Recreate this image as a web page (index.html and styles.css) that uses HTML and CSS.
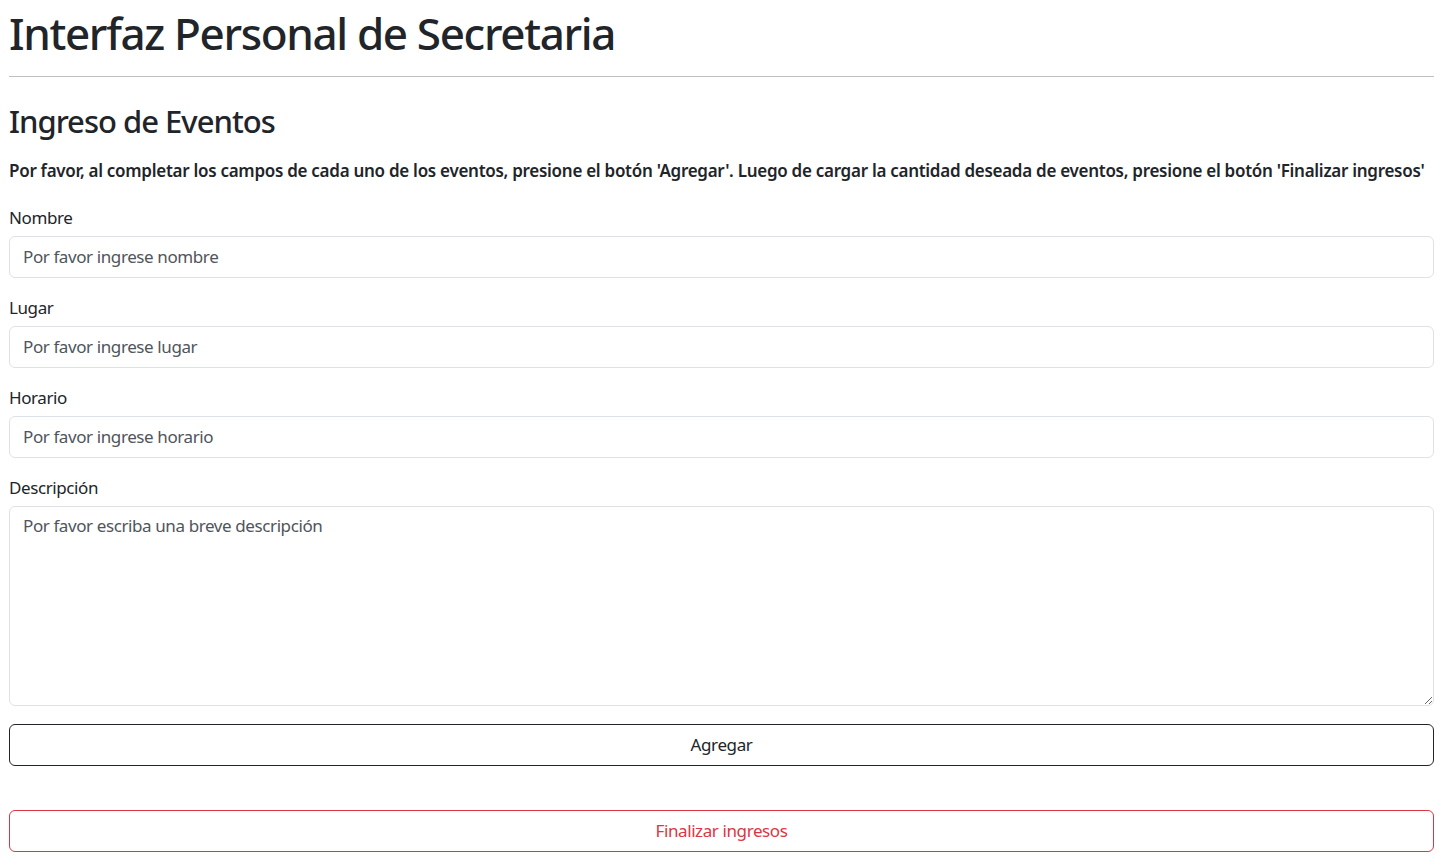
FILE: index.html
```html
<!DOCTYPE html>
<html lang="es">
<head>
<meta charset="utf-8">
<title>Interfaz Personal de Secretaria</title>
<link rel="stylesheet" href="styles.css">
</head>
<body>
<main class="page">
  <h1 class="title">Interfaz Personal de Secretaria</h1>
  <hr class="rule">
  <h2 class="subtitle">Ingreso de Eventos</h2>
  <p class="intro"><b>Por favor, al completar los campos de cada uno de los eventos, presione el botón 'Agregar'. Luego de cargar la cantidad deseada de eventos, presione el botón 'Finalizar ingresos'</b></p>
  <form class="form">
    <div class="field">
      <label class="label" for="nombre">Nombre</label>
      <input class="control" id="nombre" type="text" placeholder="Por favor ingrese nombre">
    </div>
    <div class="field">
      <label class="label" for="lugar">Lugar</label>
      <input class="control" id="lugar" type="text" placeholder="Por favor ingrese lugar">
    </div>
    <div class="field">
      <label class="label" for="horario">Horario</label>
      <input class="control" id="horario" type="text" placeholder="Por favor ingrese horario">
    </div>
    <div class="field">
      <label class="label" for="descripcion">Descripción</label>
      <textarea class="control area" id="descripcion" placeholder="Por favor escriba una breve descripción"></textarea>
    </div>
    <button type="button" class="btn btn-dark">Agregar</button>
  </form>
  <button type="button" class="btn btn-danger finish">Finalizar ingresos</button>
</main>
</body>
</html>
```
FILE: styles.css
```css
* { box-sizing: border-box; }
html, body { margin: 0; padding: 0; background: #fff; }
body {
  font-family: "Noto Sans", "Open Sans", sans-serif;
  color: #212529;
  font-size: 17px;
  line-height: 1.5;
}
.page {
  padding: 0 16px 0 9px;
}
.title {
  font-size: 44px;
  font-weight: 500;
  line-height: 1.2;
  margin: 0;
  padding-top: 7px;
  letter-spacing: -1.35px;
}
.rule {
  border: 0;
  border-top: 1px solid #bfc0c1;
  margin: 16px 0 26px;
}
.subtitle {
  font-size: 31px;
  font-weight: 500;
  line-height: 37px;
  margin: 0 0 18px;
  letter-spacing: -1px;
}
.intro {
  margin: 0 0 22px;
  font-size: 17px;
  line-height: 26px;
  letter-spacing: -0.28px;
  white-space: nowrap;
}
.intro b { font-weight: 600; }
.form { margin: 0; }
.field {
  display: flex;
  flex-direction: column;
  margin-bottom: 18px;
}
.label {
  font-size: 17px;
  line-height: 24px;
  margin-bottom: 6px;
  letter-spacing: -0.4px;
}
.control {
  display: block;
  width: 100%;
  height: 42px;
  padding: 6px 13px;
  font-family: inherit;
  font-size: 17px;
  line-height: 26px;
  color: #212529;
  background: #fff;
  border: 1px solid #dee2e6;
  border-radius: 6px;
  outline: none;
  letter-spacing: -0.4px;
}
.control::placeholder { color: #4f555b; opacity: 1; }
.area {
  height: 200px;
  resize: vertical;
}
.btn {
  display: block;
  width: 100%;
  height: 42px;
  font-family: inherit;
  font-size: 17px;
  line-height: 26px;
  background: #fff;
  border-radius: 6px;
  cursor: pointer;
  letter-spacing: -0.4px;
}
.btn-dark {
  color: #212529;
  border: 1px solid #212529;
}
.btn-danger {
  color: #dc3545;
  border: 1px solid #dc3545;
}
.finish { margin-top: 44px; }
```
